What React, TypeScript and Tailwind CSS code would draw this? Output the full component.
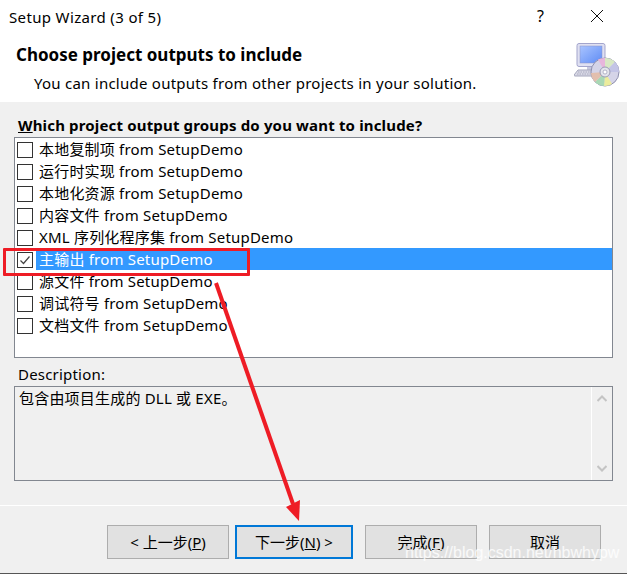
const FONT = "font-['Noto_Sans','Noto_Sans_CJK_SC',sans-serif]"

const ITEMS = [
  '本地复制项 from SetupDemo',
  '运行时实现 from SetupDemo',
  '本地化资源 from SetupDemo',
  '内容文件 from SetupDemo',
  'XML 序列化程序集 from SetupDemo',
  '主输出 from SetupDemo',
  '源文件 from SetupDemo',
  '调试符号 from SetupDemo',
  '文档文件 from SetupDemo',
]

function SetupIcon() {
  return (
    <svg width="46" height="44" viewBox="0 0 46 44" className="shrink-0">
      <defs>
        <linearGradient id="screen" x1="0" y1="0" x2="1" y2="1">
          <stop offset="0" stopColor="#a9c4ff" />
          <stop offset="1" stopColor="#5f8cf5" />
        </linearGradient>
      </defs>
      <rect x="3" y="0.5" width="28" height="23" rx="2" fill="#dfe0f2" stroke="#a3a5cc" />
      <rect x="6" y="3" width="22" height="17" fill="url(#screen)" stroke="#8d93c8" strokeWidth="0.5" />
      <rect x="13" y="24" width="10" height="4" fill="#c6c7de" />
      <path d="M4 27h20l2 6H1a1 1 0 0 1-1-1z" fill="#d9d9e6" stroke="#a3a5bb" strokeWidth="1" />
      <path d="M4 29h18M3 31h20" stroke="#9c9eb4" strokeWidth="0.8" strokeDasharray="1.5 1" />
      <circle cx="31" cy="29" r="14" fill="#d5d4e8" stroke="#8e8fae" />
      <path d="M31 29L24 16.5A14 14 0 0 1 31 15z" fill="#e7b6dc" />
      <path d="M31 29L31 15A14 14 0 0 1 41 19z" fill="#d8e8c4" />
      <path d="M31 29L41 19A14 14 0 0 1 45 29z" fill="#c3c4e6" />
      <path d="M31 29L38 41A14 14 0 0 1 30 43z" fill="#ecec9c" />
      <path d="M31 29L30 43A14 14 0 0 1 21 39z" fill="#a9d8b4" />
      <path d="M31 29L21 39A14 14 0 0 1 17 30z" fill="#e3bfae" />
      <circle cx="31" cy="29" r="5" fill="#e4e4ec" stroke="#9a9bb5" />
      <circle cx="31" cy="29" r="2" fill="#fff" stroke="#9a9bb5" strokeWidth="0.7" />
    </svg>
  )
}

function Checkbox({ checked }: { checked?: boolean }) {
  return (
    <span className="w-[16px] h-[16px] shrink-0 border border-[#333] bg-white flex items-center justify-center">
      {checked && (
        <svg width="12" height="12" viewBox="0 0 12 12">
          <path d="M1.5 6.5L4.5 9.5L10.5 2.5" fill="none" stroke="#444" strokeWidth="1.2" />
        </svg>
      )}
    </span>
  )
}

function Button({ label, width, focused }: { label: React.ReactNode; width: string; focused?: boolean }) {
  return (
    <button
      className={`${width} h-[34px] bg-[#e1e1e1] text-[15px] text-black flex items-center justify-center ${
        focused ? 'border-2 border-[#0078d7]' : 'border border-[#adadad]'
      }`}
    >
      {label}
    </button>
  )
}

export default function App() {
  return (
    <div className={`relative w-[627px] h-[574px] overflow-hidden bg-[#f0f0f0] text-black ${FONT}`}>
      {/* Title bar */}
      <div className="h-[34px] bg-white flex items-center pl-[9px]">
        <span className="text-[15px] tracking-[0.35px] leading-[20px] -mt-[1px]">Setup Wizard (3 of 5)</span>
        <span className="ml-auto mr-[46px] text-[16px] leading-none -mt-[2px]">?</span>
        <svg width="14" height="14" viewBox="0 0 14 14" className="mr-[23px] -mt-[2px]">
          <path d="M1 1L13 13M13 1L1 13" stroke="#111" strokeWidth="1" />
        </svg>
      </div>

      {/* Header */}
      <div className="h-[68px] bg-white flex pl-[16px] pr-[7px]">
        <div className="flex-1">
          <div className="text-[17px] font-bold leading-[22px] mt-[10px]">Choose project outputs to include</div>
          <div className="text-[15px] tracking-[0.25px] leading-[20px] mt-[7px] ml-[18px]">
            You can include outputs from other projects in your solution.
          </div>
        </div>
        <div className="mt-[9px]">
          <SetupIcon />
        </div>
      </div>

      {/* Body */}
      <div className="px-[14px]">
        <div className="text-[15px] tracking-[0.16px] font-bold leading-[20px] mt-[13px] ml-[4px]">
          <span className="underline">W</span>hich project output groups do you want to include?
        </div>
        <div className="h-[221px] mt-[2px] border border-[#828790] bg-white pt-px">
          {ITEMS.map((item, idx) => {
            const selected = idx === 5
            return (
              <div key={item} className="h-[22px] flex items-center pl-[2px]">
                <Checkbox checked={selected} />
                <span
                  className={`ml-[3px] h-[22px] pl-[3px] flex items-center text-[15px] tracking-[0.2px] -translate-y-[1px] ${
                    selected ? 'flex-1 bg-[#3399ff] text-white' : ''
                  }`}
                >
                  {item}
                </span>
              </div>
            )
          })}
        </div>

        <div className="text-[15px] tracking-[0.2px] leading-[20px] mt-[6px] ml-[4px]">Description:</div>
        <div className="h-[95px] mt-[2px] border border-[#828790] flex">
          <div className="flex-1 text-[15px] tracking-[0.2px] leading-[20px] pl-[4px] pt-[1px]">
            包含由项目生成的 DLL 或 EXE。
          </div>
          <div className="w-[21px] border-l border-white flex flex-col justify-between items-center py-[8px]">
            <svg width="10" height="7" viewBox="0 0 10 7">
              <path d="M0.5 6L5 1.5L9.5 6" fill="none" stroke="#c4c4c4" strokeWidth="2" />
            </svg>
            <svg width="10" height="7" viewBox="0 0 10 7">
              <path d="M0.5 1L5 5.5L9.5 1" fill="none" stroke="#c4c4c4" strokeWidth="2" />
            </svg>
          </div>
        </div>
      </div>

      {/* Footer */}
      <div className="h-px bg-white mt-[24px]" />
      <div className="flex pl-[107px] mt-[19px]">
        <Button
          width="w-[122px]"
          label={
            <>
              &lt; 上一步(<span className="underline">P</span>)
            </>
          }
        />
        <div className="ml-[6px]">
          <Button
            width="w-[118px]"
            focused
            label={
              <>
                下一步(<span className="underline">N</span>) &gt;
              </>
            }
          />
        </div>
        <div className="ml-[12px]">
          <Button
            width="w-[112px]"
            label={
              <>
                完成(<span className="underline">F</span>)
              </>
            }
          />
        </div>
        <div className="ml-[12px]">
          <Button width="w-[112px]" label="取消" />
        </div>
      </div>
      <div className="absolute left-0 right-0 bottom-0 h-px bg-[#555]" />

      {/* Annotations on top of the screenshot */}
      <div className="absolute left-[3px] top-[248px] w-[247px] h-[28px] border-[3px] border-[#ee1c25] rounded-[1px]" />
      <svg className="absolute left-0 top-0" width="627" height="574" viewBox="0 0 627 574">
        <path d="M216 283L293 504" stroke="#ee1c25" strokeWidth="4" fill="none" />
        <path d="M286 507L300 500L299 521z" fill="#ee1c25" />
      </svg>
      <div className="absolute left-[405px] top-[545px] text-[16px] leading-none text-white/80 font-['Liberation_Sans',sans-serif]">
        https://blog.csdn.net/hbwhypw
      </div>
    </div>
  )
}
